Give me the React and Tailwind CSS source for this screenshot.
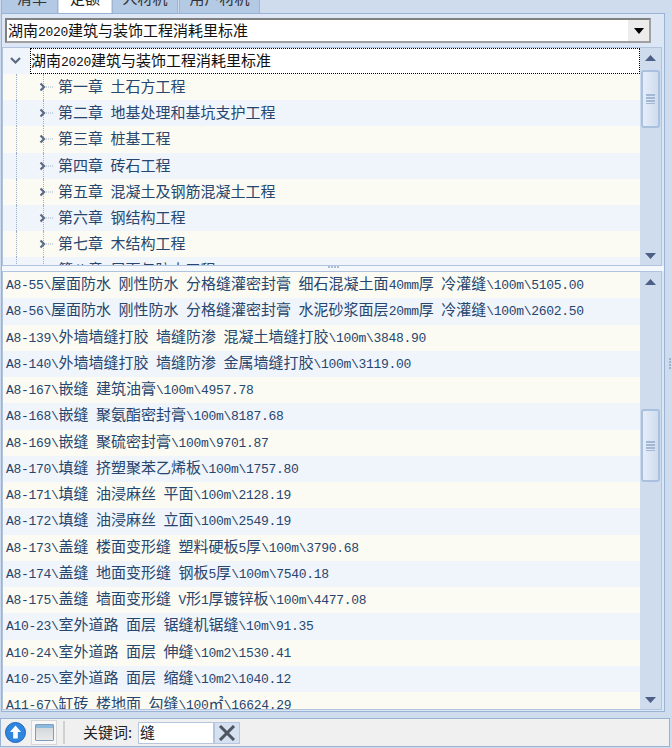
import React from 'react';

const chapters = ['第一章 土石方工程', '第二章 地基处理和基坑支护工程', '第三章 桩基工程', '第四章 砖石工程', '第五章 混凝土及钢筋混凝土工程', '第六章 钢结构工程', '第七章 木结构工程', '第八章 屋面与防水工程'];

const items = [
  'A8-55\\屋面防水 刚性防水 分格缝灌密封膏 细石混凝土面40mm厚 冷灌缝\\100m\\5105.00',
  'A8-56\\屋面防水 刚性防水 分格缝灌密封膏 水泥砂浆面层20mm厚 冷灌缝\\100m\\2602.50',
  'A8-139\\外墙墙缝打胶 墙缝防渗 混凝土墙缝打胶\\100m\\3848.90',
  'A8-140\\外墙墙缝打胶 墙缝防渗 金属墙缝打胶\\100m\\3119.00',
  'A8-167\\嵌缝 建筑油膏\\100m\\4957.78',
  'A8-168\\嵌缝 聚氨酯密封膏\\100m\\8187.68',
  'A8-169\\嵌缝 聚硫密封膏\\100m\\9701.87',
  'A8-170\\填缝 挤塑聚苯乙烯板\\100m\\1757.80',
  'A8-171\\填缝 油浸麻丝 平面\\100m\\2128.19',
  'A8-172\\填缝 油浸麻丝 立面\\100m\\2549.19',
  'A8-173\\盖缝 楼面变形缝 塑料硬板5厚\\100m\\3790.68',
  'A8-174\\盖缝 地面变形缝 钢板5厚\\100m\\7540.18',
  'A8-175\\盖缝 墙面变形缝 V形1厚镀锌板\\100m\\4477.08',
  'A10-23\\室外道路 面层 锯缝机锯缝\\10m\\91.35',
  'A10-24\\室外道路 面层 伸缝\\10m2\\1530.41',
  'A10-25\\室外道路 面层 缩缝\\10m2\\1040.12',
  'A11-67\\缸砖 楼地面 勾缝\\100㎡\\16624.29',
];

// latin runs are half the CJK width, like the bitmap font in the original
const Mixed = ({ text }) =>
  text.split(/([\x20-\x7e]+)/).map((part, i) =>
    /^[\x20-\x7e]+$/.test(part) ? (
      <span key={i} className="font-['Liberation_Mono',monospace] text-[13px] tracking-[-0.3px]">{part}</span>
    ) : (
      <span key={i}>{part}</span>
    )
  );

const Arrow = ({ up }) => (
  <svg width="11" height="6" viewBox="0 0 11 6">
    <path d={up ? 'M5.5 0L11 6H0z' : 'M0 0h11L5.5 6z'} fill="#4c5f85" />
  </svg>
);

const Scrollbar = ({ before, thumb }) => (
  <div className="w-[21px] shrink-0 h-full flex flex-col bg-[#cfdcee]">
    <div className="h-[19px] shrink-0 flex items-center justify-center"><Arrow up /></div>
    <div className="flex-1 min-h-0">
      <div style={{ height: before }} />
      <div style={{ height: thumb }} className="mx-[1px] border-2 border-[#a9c0de] rounded-[3px] bg-gradient-to-r from-[#e6edf8] to-[#cfdcef] flex flex-col items-center justify-center gap-[1px]">
        <div className="w-[9px] h-[2px] bg-[#a5b8d3]" />
        <div className="w-[9px] h-[2px] bg-[#a5b8d3]" />
        <div className="w-[9px] h-[2px] bg-[#a5b8d3]" />
        <div className="w-[9px] h-[1px] bg-[#a5b8d3]" />
      </div>
    </div>
    <div className="h-[19px] shrink-0 flex items-center justify-center"><Arrow /></div>
  </div>
);

const Tab = ({ label, active, w, first }) => (
  <div style={{ width: w }} className={`h-[30px] shrink-0 flex items-center justify-center rounded-t-[2px] ${first ? 'pl-[5px]' : ''} ${active ? 'bg-white text-[#222]' : 'bg-[#b4c9e3] text-[#333] border-x border-[#9db5d3]'}`}>
    {label}
  </div>
);

export default function App() {
  return (
    <div className="w-[672px] h-[748px] overflow-hidden bg-[#cfdcee] relative font-['Noto_Sans_CJK_SC',sans-serif] text-[15px]">
      {/* tabs, cut off by the top of the window */}
      <div className="h-[13px] overflow-hidden flex items-end gap-[1px] pl-[1px]">
        <Tab label="清单" w={57} first />
        <Tab label="定额" active w={52} />
        <Tab label="人材机" w={66} />
        <Tab label="用户材机" w={81} />
      </div>

      <div className="ml-[1px] w-[664px] h-[699px] border border-[#98b3d3] bg-[#dce6f4] flex flex-col">
        {/* combo */}
        <div className="h-[33px] shrink-0 pl-[3px] pt-[4px]">
          <div className="w-[646px] h-[25px] bg-[#f1f1f1] border-2 border-[#808080] border-r-[#a0a0a0] border-b-[#a0a0a0] flex">
            <div className="flex-1 bg-white pl-[1px] leading-[19px] text-[#111]"><Mixed text="湖南2020建筑与装饰工程消耗里标准" /></div>
            <div className="w-[21px] flex items-center justify-center bg-[#ececec]">
              <svg width="10" height="6" viewBox="0 0 10 6"><path d="M0 0h10L5 6z" fill="#000" /></svg>
            </div>
          </div>
        </div>

        {/* chapter tree */}
        <div className="h-[219px] w-[660px] shrink-0 border border-[#b0c4de] flex overflow-hidden">
          <div className="flex-1 overflow-hidden">
            <div className="h-[26px] flex items-center">
              <div className="w-[27px] shrink-0 h-full bg-[#f0f4fb] flex items-center pl-[7px]">
                <svg width="12" height="8" viewBox="0 0 12 8"><path d="M1 1l4.500 4.500L10 1" fill="none" stroke="#5a6b85" strokeWidth="2.200" /></svg>
              </div>
              <div className="flex-1 h-full bg-white border border-dotted border-black leading-[22px] text-[#111]"><Mixed text="湖南2020建筑与装饰工程消耗里标准" /></div>
            </div>
            {chapters.map((c, i) => (
              <div key={c} className={`h-[26.2px] flex ${i % 2 ? 'bg-[#f0f4fb]' : 'bg-[#fbfbf3]'}`}>
                <div className="w-[13px] shrink-0" />
                <div className="w-[27px] shrink-0 border-l border-dotted border-[#9fb0c6]" />
                <div className="w-[15px] shrink-0 border-l border-dotted border-[#9fb0c6] flex items-center">
                  <svg width="16" height="10" viewBox="0 0 16 10" className="-ml-[5px] shrink-0">
                    <path d="M1.500 1.500L5 5L1.500 8.500" fill="none" stroke="#5a6b85" strokeWidth="2.200" />
                    <path d="M7 5h8" stroke="#9fb0c6" strokeDasharray="1 1" />
                  </svg>
                </div>
                <div className="leading-[24px] text-[#27466e] whitespace-nowrap"><Mixed text={c} /></div>
              </div>
            ))}
          </div>
          <Scrollbar before={3} thumb={58} />
        </div>

        {/* splitter */}
        <div className="h-[5px] w-[662px] shrink-0 bg-[#f4f7fb] flex justify-center gap-[1px]">
          <div className="w-[2px] h-[2px] bg-[#a9bdd8]" />
          <div className="w-[2px] h-[2px] bg-[#a9bdd8]" />
          <div className="w-[2px] h-[2px] bg-[#a9bdd8]" />
          <div className="w-[2px] h-[2px] bg-[#a9bdd8]" />
        </div>

        {/* norm list */}
        <div className="h-[439px] w-[660px] shrink-0 border border-[#b0c4de] flex overflow-hidden">
          <div className="flex-1 overflow-hidden">
            {items.map((t, i) => (
              <div key={t} className={`h-[26.25px] pl-[3px] leading-[22px] text-[#27466e] whitespace-nowrap ${i % 2 ? 'bg-[#f0f4fb]' : 'bg-[#fbfbf3]'}`}>
                <Mixed text={t} />
              </div>
            ))}
          </div>
          <Scrollbar before={118} thumb={73} />
        </div>
      </div>

      {/* footer toolbar */}
      <div className="mt-[6px] w-[670px] h-[29px] border border-[#9ab3d2] bg-[#f0f0f0] flex items-center pl-[4px]">
        <svg width="21" height="21" viewBox="0 0 21 21" className="shrink-0">
          <circle cx="10.500" cy="10.500" r="10" fill="#2f86e0" />
          <circle cx="10.500" cy="10.500" r="10" fill="none" stroke="#1f62b8" />
          <path d="M10.500 3.500L16 10h-3.200v6.500H8.200V10H5z" fill="#fff" />
        </svg>
        <div className="ml-[5px] w-[26px] h-[25px] border border-[#d7d7d7] bg-[#f7f7f7] flex items-center justify-center shrink-0">
          <div className="w-[19px] h-[17px] border border-[#7f9dbf] rounded-[1px] bg-gradient-to-b from-[#cfd3d8] to-[#e9e9e9]">
            <div className="h-[3px] bg-[#8db9dd]" />
          </div>
        </div>
        <div className="ml-[6px] w-[2px] h-[23px] bg-[#d0d0d0] shrink-0" />
        <div className="ml-[18px] w-[55px] shrink-0 text-[#222]">关键词:</div>
        <div className="w-[76px] h-[22px] bg-white border border-[#b5c6de] leading-[18px] pl-[1px] text-[#222] shrink-0">缝</div>
        <div className="w-[26px] h-[22px] bg-[#d5e0f0] border border-[#b5c6de] flex items-center justify-center shrink-0">
          <svg width="18" height="16" viewBox="0 0 18 16"><path d="M2 1l14 14M16 1L2 15" stroke="#4c5560" strokeWidth="3" /></svg>
        </div>
      </div>

      {/* side grip on the splitter at the right edge */}
      <div className="absolute left-[669px] top-[358px] w-[2px] flex flex-col gap-[1px]">
        <div className="h-[2px] bg-[#9fb3cf]" />
        <div className="h-[2px] bg-[#9fb3cf]" />
        <div className="h-[2px] bg-[#9fb3cf]" />
        <div className="h-[2px] bg-[#9fb3cf]" />
      </div>
    </div>
  );
}
